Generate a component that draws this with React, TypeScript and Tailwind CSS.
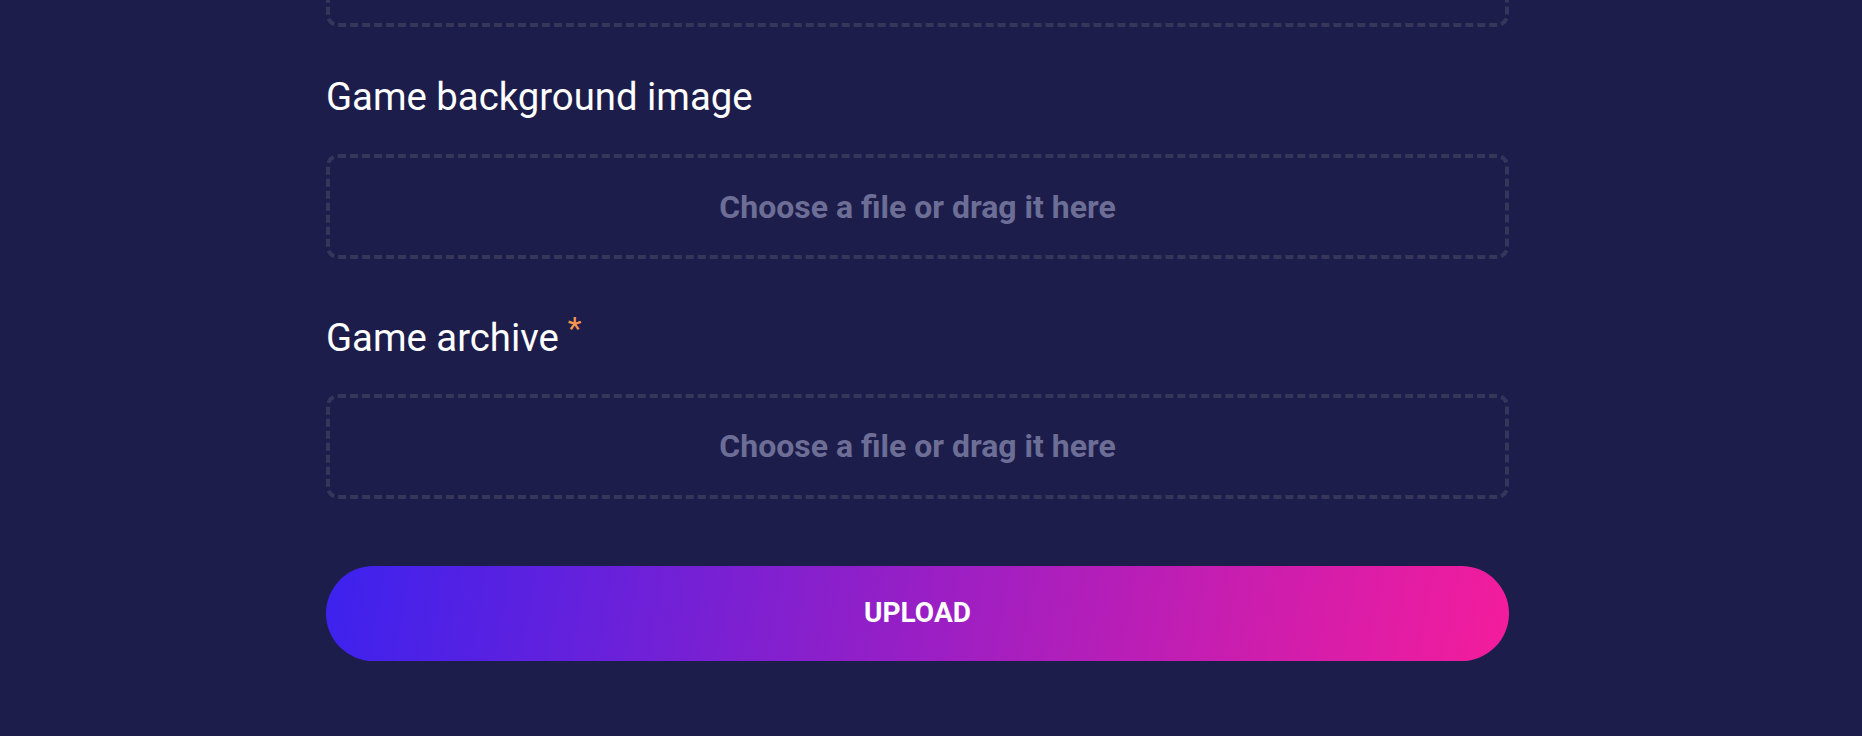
const DropZone = ({ className = "" }: { className?: string }) => (
  <div
    className={`flex h-[105px] w-full items-center justify-center rounded-[12px] border-4 border-dashed border-[#35365a] ${className}`}
  >
    <span className="text-[32px] font-bold text-[#6d6e96]">
      Choose a file or drag it here
    </span>
  </div>
);

export default function App() {
  return (
    <div
      className="h-[736px] w-full overflow-hidden bg-[#1d1d4b]"
      style={{ fontFamily: "Roboto, 'Noto Sans', sans-serif" }}
    >
      <div className="ml-[326px] w-[1183px]">
        <div className="-mt-[78px] h-[105px] w-full rounded-[12px] border-4 border-dashed border-[#35365a]" />

        <label className="mt-[51px] block text-[38.3px] leading-none text-white">
          Game background image
        </label>
        <DropZone className="mt-[38px]" />

        <label className="mt-[60px] block text-[38.3px] leading-none text-white">
          Game archive
          <span className="relative -top-[7px] ml-[9px] align-top text-[32px] leading-none text-[#f5964f]">
            *
          </span>
        </label>
        <DropZone className="mt-[36px]" />

        <button className="mt-[67px] flex h-[95px] w-full items-center justify-center rounded-full bg-[linear-gradient(100deg,#3c22ee,#f41c9c)] text-[28px] font-bold text-white">
          UPLOAD
        </button>
      </div>
    </div>
  );
}
